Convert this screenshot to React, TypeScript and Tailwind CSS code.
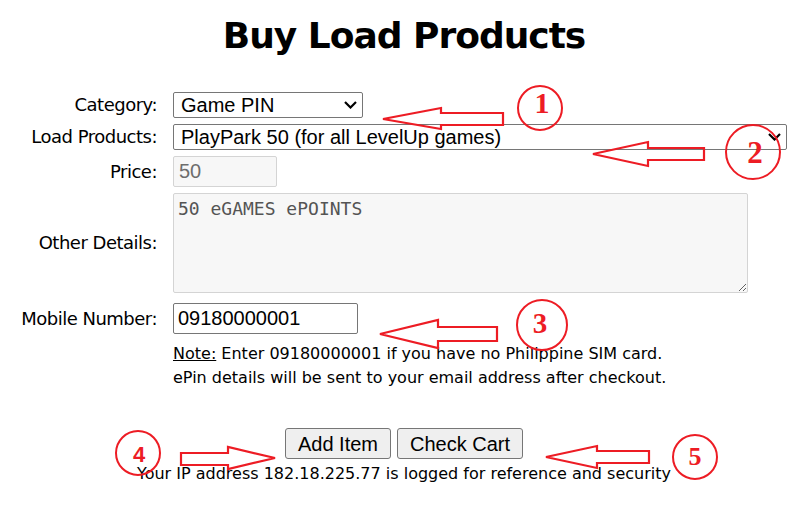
import React from "react";

const RED = "#ed1c24";

const labelCls =
  "w-[157px] shrink-0 text-right text-[18px] leading-[22px] tracking-[-0.5px] font-['DejaVu_Sans',sans-serif] text-black";

const controlFont = "font-['Liberation_Sans',Arial,sans-serif] text-[20px]";

const Row = ({
  label,
  children,
  className = "",
}: {
  label: string;
  children: React.ReactNode;
  className?: string;
}) => (
  <div className={`flex items-center gap-4 ${className}`}>
    <label className={labelCls}>{label}</label>
    {children}
  </div>
);

const Chevron = () => (
  <svg
    className="absolute right-[6px] top-[9px] pointer-events-none"
    width={13}
    height={8}
    viewBox="0 0 13 8"
  >
    <path d="M1 1 L6.5 6.5 L12 1" fill="none" stroke="#000" strokeWidth={2.2} />
  </svg>
);

const Select = ({ width, options }: { width: string; options: string[] }) => (
  <div className={`relative h-[26px] ${width}`}>
    <select
      defaultValue={options[0]}
      className={`${controlFont} block appearance-none h-[26px] w-full leading-[24px] border border-[#767676] rounded-[2px] bg-white pl-[7px] pr-[24px]`}
    >
      {options.map((o) => (
        <option key={o} value={o}>
          {o}
        </option>
      ))}
    </select>
    <Chevron />
  </div>
);

// red paint-style arrows + circled step numbers drawn over the form
const arrows = [
  "383,104 441,93 441,98 503,98 503,110 441,110 441,114",
  "593,139 648,127 648,133 704,133 704,145 648,145 648,151",
  "380,319 438,305 438,312 497,312 497,326 438,326 438,333",
  "275,443 228,432 228,438 181,438 181,450 228,450 228,454",
  "546,442 597,431 597,436 649,436 649,448 597,448 597,453",
];

const steps = [
  { cx: 540, cy: 93, r: 22, n: "1", tx: 542, ty: 98, size: 30, serif: true },
  { cx: 753, cy: 137, r: 27, n: "2", tx: 755, ty: 148, size: 31, serif: true },
  { cx: 542, cy: 310, r: 25, n: "3", tx: 540, ty: 318, size: 29, serif: true },
  { cx: 138, cy: 438, r: 22, n: "4", tx: 139, ty: 447, size: 22, serif: false },
  { cx: 695, cy: 442, r: 22, n: "5", tx: 695, ty: 450, size: 26, serif: true },
];

const Annotations = () => (
  <svg
    className="absolute left-0 top-0 pointer-events-none"
    width={808}
    height={508}
    viewBox="0 0 808 508"
  >
    {arrows.map((p) => (
      <polygon key={p} points={p} fill="none" stroke={RED} strokeWidth={2.2} />
    ))}
    {steps.map((s) => (
      <g key={s.n}>
        <circle cx={s.cx} cy={s.cy} r={s.r} fill="none" stroke={RED} strokeWidth={2} />
        <text
          x={s.tx}
          y={s.ty}
          textAnchor="middle"
          fill={RED}
          fontWeight="bold"
          fontSize={s.size}
          fontFamily={s.serif ? "'Liberation Serif', serif" : "'Liberation Sans', sans-serif"}
        >
          {s.n}
        </text>
      </g>
    ))}
  </svg>
);

export default function App() {
  return (
    <div className="relative w-full min-h-[508px] bg-white text-black">
      <h1 className="mt-[15px] text-center text-[36px] leading-[42px] font-bold tracking-[-1px] font-['DejaVu_Sans',sans-serif]">
        Buy Load Products
      </h1>

      <form className="mt-[35px] flex flex-col" onSubmit={(e) => e.preventDefault()}>
        <Row label="Category:">
          <Select width="w-[190px]" options={["Game PIN", "Prepaid Load"]} />
        </Row>

        <Row label="Load Products:" className="mt-[6px]">
          <Select
            width="w-[614px]"
            options={["PlayPark 50 (for all LevelUp games)", "PlayPark 100 (for all LevelUp games)"]}
          />
        </Row>

        <Row label="Price:" className="mt-[6px]">
          <input
            readOnly
            value="50"
            className={`${controlFont} block h-[31px] w-[104px] border border-[#d4d4d4] rounded-[2px] bg-[#f7f7f7] pl-[5px] text-[#6d6d6d]`}
          />
        </Row>

        <Row label="Other Details:" className="mt-[6px]">
          <textarea
            readOnly
            value="50 eGAMES ePOINTS"
            className="block h-[100px] w-[575px] border border-[#d4d4d4] rounded-[2px] bg-[#f7f7f7] pl-[4px] pt-[1px] text-[18px] text-[#545454] font-['DejaVu_Sans_Mono',monospace]"
          />
        </Row>

        <Row label="Mobile Number:" className="mt-[10px]">
          <input
            defaultValue="09180000001"
            className={`${controlFont} block h-[31px] w-[185px] border border-[#767676] rounded-[2px] bg-white pl-[4px]`}
          />
        </Row>

        <div className="mt-[8px] ml-[173px] text-[16px] leading-[24px] font-['DejaVu_Sans',sans-serif]">
          <p>
            <span className="underline">Note:</span> Enter 09180000001 if you have no Philippine SIM card.
          </p>
          <p>ePin details will be sent to your email address after checkout.</p>
        </div>

        <div className="mt-[38px] flex justify-center gap-[6px]">
          <button
            type="button"
            className={`${controlFont} h-[31px] px-[12px] border border-[#767676] rounded-[3px] bg-[#efefef]`}
          >
            Add Item
          </button>
          <button
            type="button"
            className={`${controlFont} h-[31px] px-[12px] border border-[#767676] rounded-[3px] bg-[#efefef]`}
          >
            Check Cart
          </button>
        </div>

        <p className="mt-[5px] text-center text-[16px] leading-[20px] font-['DejaVu_Sans',sans-serif]">
          Your IP address 182.18.225.77 is logged for reference and security
        </p>
      </form>

      <Annotations />
    </div>
  );
}
